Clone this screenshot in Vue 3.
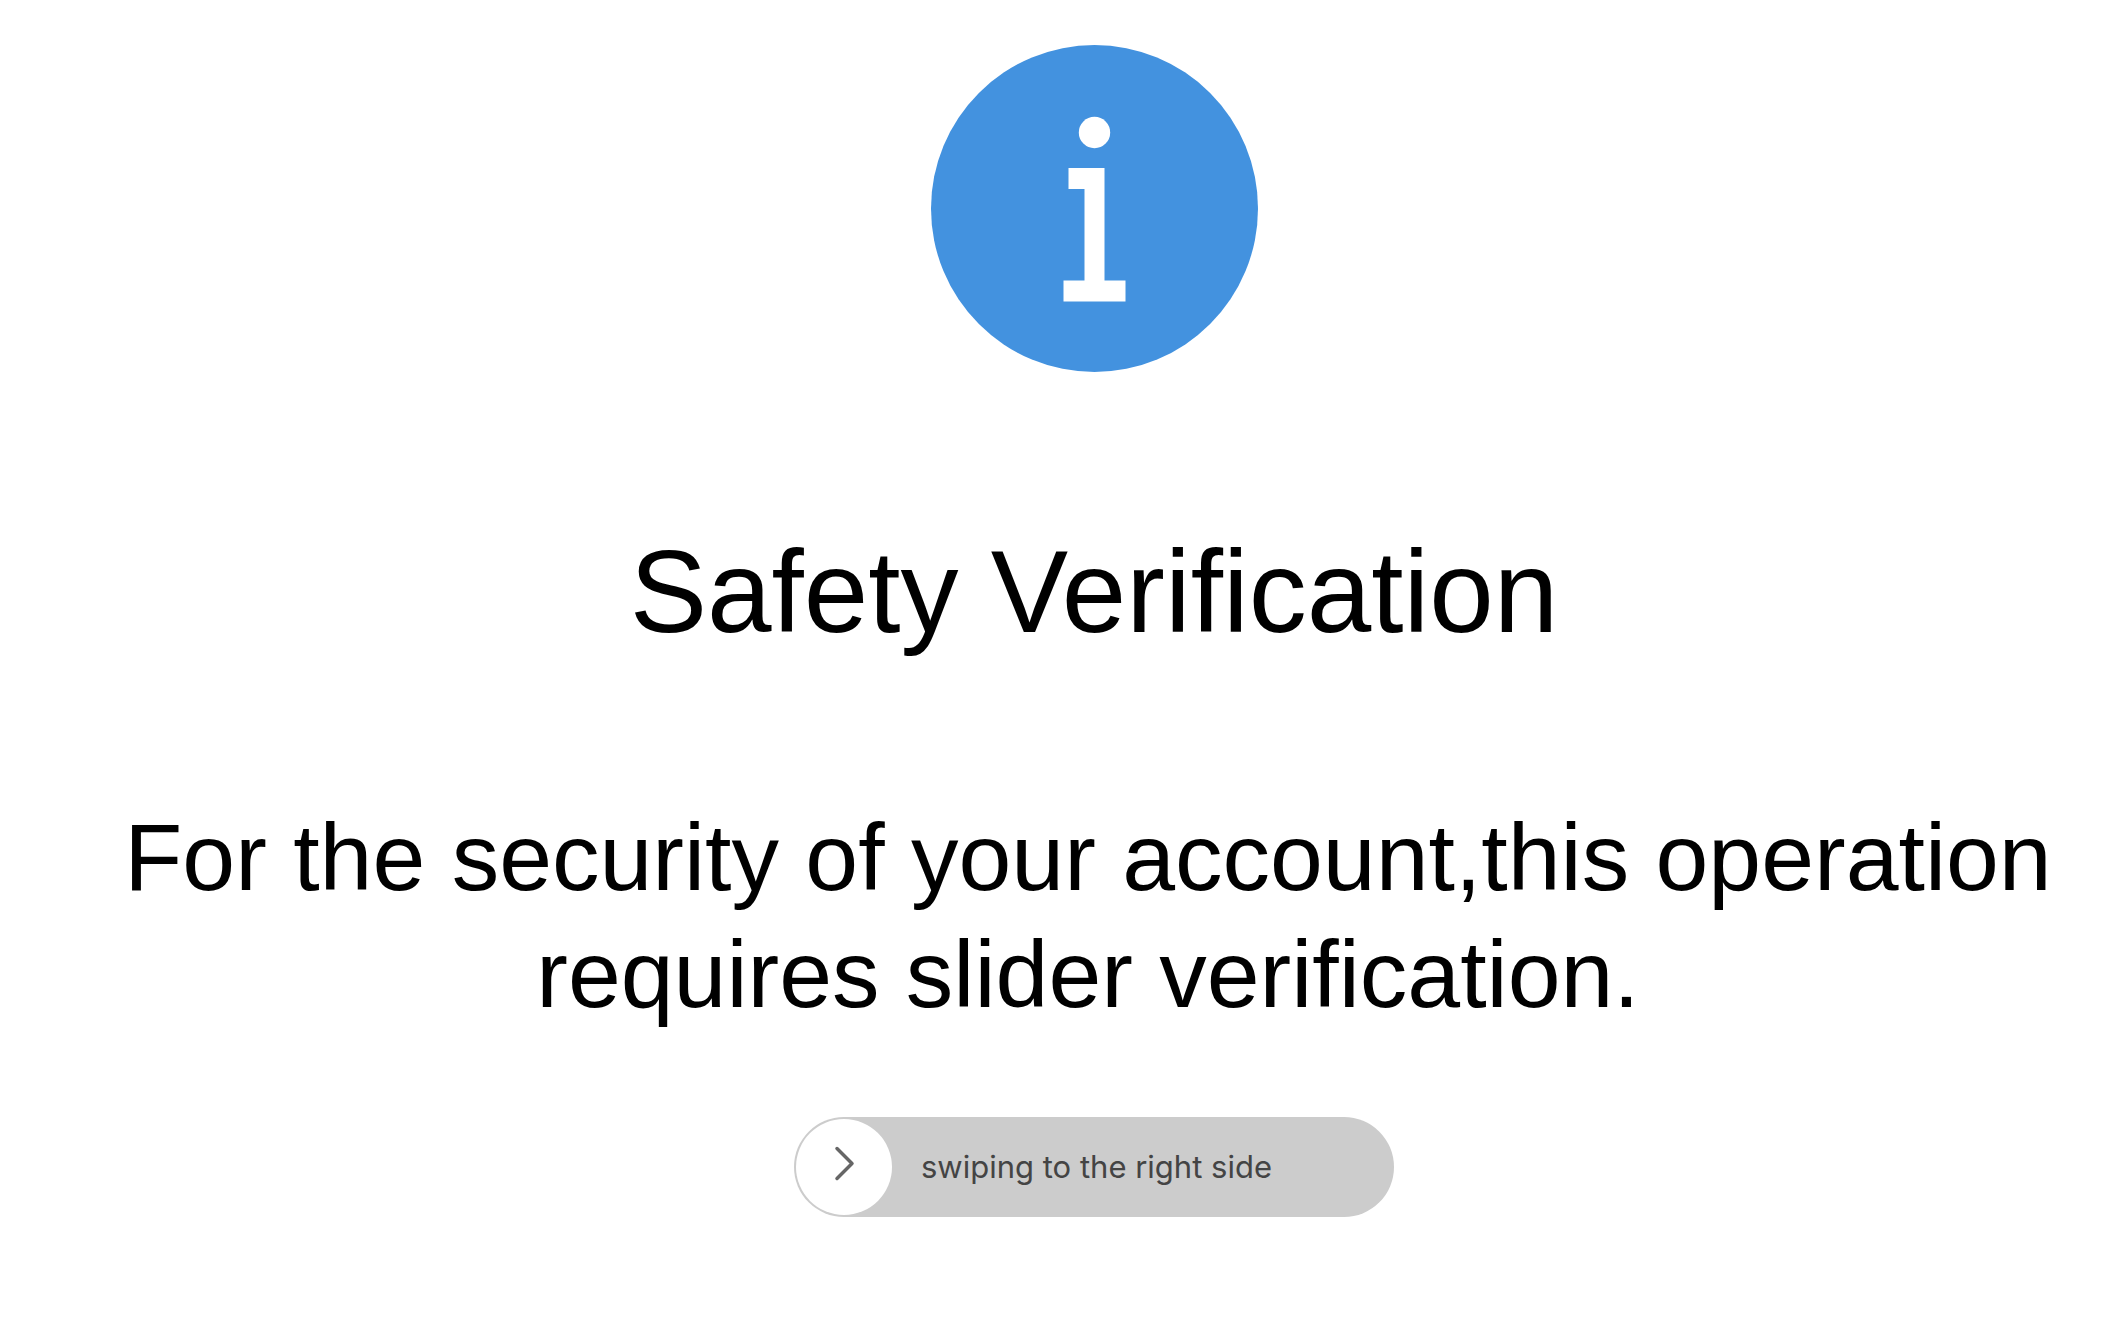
<template>
  <main class="verify-page">
    <svg class="info-icon" viewBox="0 0 327 327" aria-hidden="true">
      <circle cx="163.5" cy="163.5" r="163.5" fill="#4392df" />
      <circle cx="163.5" cy="87.500" r="15.7" fill="#fff" />
      <path d="M137.500 123h36v112.500h21v21h-62v-21h21v-91.500h-16z" fill="#fff" />
    </svg>

    <h1 class="title">Safety Verification</h1>

    <p class="description">
      For the security of your account,this operation requires slider verification.
    </p>

    <div class="slider">
      <label for="swipe" class="slider-label">swiping to the right side</label>
      <input
        id="swipe"
        v-model.number="progress"
        class="slider-input"
        type="range"
        min="0"
        max="100"
        @change="handleRelease"
      />
      <div class="slider-rail">
        <svg
          class="slider-arrow"
          :style="{ marginLeft: progress + '%' }"
          viewBox="0 0 96 96"
          aria-hidden="true"
        >
          <path d="M41 29.500l15 15l-15 15" />
        </svg>
      </div>
    </div>
  </main>
</template>

<script setup>
import { ref } from 'vue'

const emit = defineEmits(['verified'])

const progress = ref(0)

// Snap back unless the knob reached the end
function handleRelease() {
  if (progress.value >= 100) {
    emit('verified')
  } else {
    progress.value = 0
  }
}
</script>

<style>
body {
  background: #fff;
}
</style>

<style scoped>
.verify-page {
  display: flex;
  flex-direction: column;
  align-items: center;
  padding: 45px 0 45px 60px;
  font-family: 'Liberation Sans', Arial, sans-serif;
  color: #000;
}

.info-icon {
  width: 327px;
  height: 327px;
}

.title {
  margin: 156px 0 0;
  font-size: 116px;
  font-weight: 400;
  line-height: 128px;
  text-align: center;
}

.description {
  margin: 143px 0 0;
  padding-right: 12px;
  font-size: 95px;
  line-height: 117px;
  text-align: center;
}

.slider {
  display: grid;
  width: 600px;
  max-width: 100%;
  height: 100px;
  margin-top: 84px;
  border-radius: 50px;
  background: #ccc;
}

.slider-label,
.slider-input,
.slider-rail {
  grid-area: 1 / 1;
}

.slider-label {
  align-self: center;
  padding-left: 127px;
  font-family: Inter, Roboto, sans-serif;
  font-size: 31px;
  line-height: 40px;
  color: #444;
}

.slider-input {
  appearance: none;
  width: 100%;
  height: 100px;
  margin: 0;
  padding: 0 2px;
  box-sizing: border-box;
  border-radius: 50px;
  background: transparent;
  cursor: pointer;
}

.slider-input::-webkit-slider-thumb {
  appearance: none;
  width: 96px;
  height: 96px;
  border-radius: 50%;
  background: #fff;
}

.slider-rail {
  padding: 2px 98px 2px 2px;
  pointer-events: none;
}

.slider-arrow {
  display: block;
  width: 96px;
  height: 96px;
  fill: none;
  stroke: #666;
  stroke-width: 3.5;
  stroke-linecap: round;
  stroke-linejoin: round;
}
</style>
